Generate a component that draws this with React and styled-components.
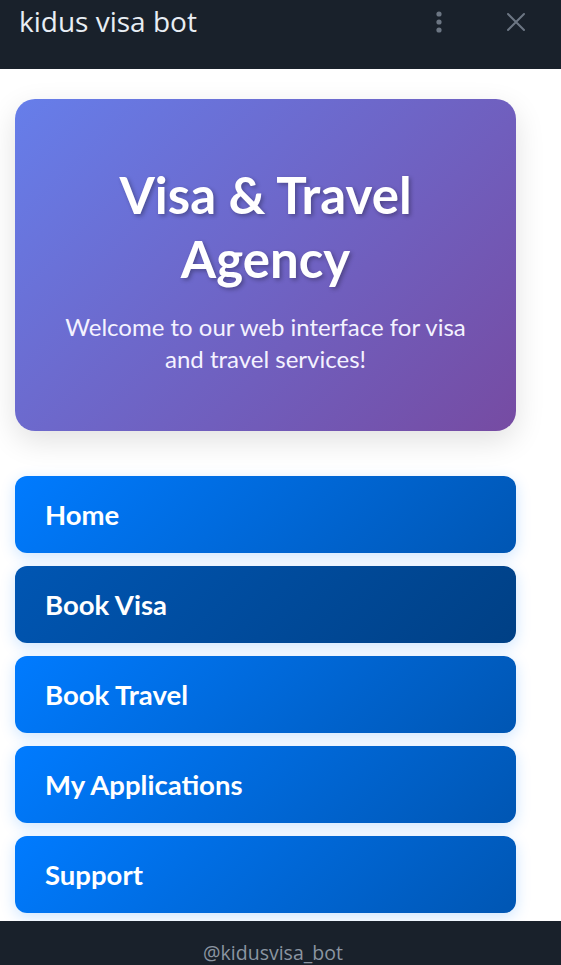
import React from "react";
import styled, { createGlobalStyle } from "styled-components";

const GlobalStyle = createGlobalStyle`
  html, body {
    margin: 0;
    padding: 0;
    background: #ffffff;
  }
  * {
    box-sizing: border-box;
  }
`;

const links = ["Home", "Book Visa", "Book Travel", "My Applications", "Support"];

const App = () => {
  return (
    <>
      <GlobalStyle />
      <Frame>
        <TopBar>
          <BotName>kidus visa bot</BotName>
          <BarActions>
            <IconButton aria-label="menu">
              <svg width="6" height="24" viewBox="0 0 6 24">
                <circle cx="3" cy="4" r="2.6" fill="currentColor" />
                <circle cx="3" cy="12" r="2.6" fill="currentColor" />
                <circle cx="3" cy="20" r="2.6" fill="currentColor" />
              </svg>
            </IconButton>
            <IconButton aria-label="close">
              <svg width="20" height="20" viewBox="0 0 20 20">
                <path
                  d="M2 2 L18 18 M18 2 L2 18"
                  stroke="currentColor"
                  strokeWidth="2"
                  strokeLinecap="round"
                />
              </svg>
            </IconButton>
          </BarActions>
        </TopBar>
        <Main>
          <Content>
            <Hero>
              <HeroTitle>Visa &amp; Travel Agency</HeroTitle>
              <HeroText>
                Welcome to our web interface for visa and travel services!
              </HeroText>
            </Hero>
            <NavList>
              {links.map((label) => (
                <NavButton key={label} $active={label === "Book Visa"}>
                  {label}
                </NavButton>
              ))}
            </NavList>
          </Content>
        </Main>
        <BottomBar>@kidusvisa_bot</BottomBar>
      </Frame>
    </>
  );
};

const Frame = styled.div`
  height: 965px;
  display: flex;
  flex-direction: column;
  overflow: hidden;
`;

const TopBar = styled.header`
  height: 69px;
  flex-shrink: 0;
  background: #19212b;
  display: flex;
  align-items: flex-start;
  justify-content: space-between;
  padding: 0 0 0 19px;
`;

const BotName = styled.div`
  font-family: "Open Sans", "Noto Sans", sans-serif;
  font-size: 28px;
  line-height: 42px;
  color: #e8eef4;
`;

const BarActions = styled.div`
  display: flex;
  align-items: center;
  height: 44px;
  gap: 64px;
  padding-right: 35px;
`;

const IconButton = styled.div`
  color: #6c7683;
  display: flex;
  align-items: center;
  justify-content: center;
  height: 44px;
`;

const Main = styled.main`
  flex: 1;
  width: 546px;
  overflow: hidden;
  background: #ffffff;
`;

const Content = styled.div`
  padding: 30px 30px 0 15px;
  font-family: "Lato", "Open Sans", sans-serif;
`;

const Hero = styled.section`
  height: 332px;
  border-radius: 20px;
  background: linear-gradient(135deg, #667eea 0%, #764ba2 100%);
  box-shadow: 0 10px 30px rgba(0, 0, 0, 0.12);
  color: #ffffff;
  text-align: center;
  padding: 64px 40px 0;
  margin-bottom: 45px;
`;

const HeroTitle = styled.h1`
  margin: 0 0 20px;
  font-size: 51px;
  line-height: 64px;
  font-weight: 700;
  text-shadow: 2px 2px 4px rgba(0, 0, 0, 0.3);
`;

const HeroText = styled.p`
  margin: 0;
  font-size: 24px;
  line-height: 32px;
  font-weight: 400;
  color: #f4f2ff;
`;

const NavList = styled.nav`
  display: flex;
  flex-direction: column;
  gap: 13px;
`;

const NavButton = styled.div`
  height: 77px;
  border-radius: 12px;
  display: flex;
  align-items: center;
  padding-left: 30px;
  color: #ffffff;
  font-size: 27.5px;
  font-weight: 700;
  background: ${({ $active }) =>
    $active
      ? "linear-gradient(135deg, #0056b3 0%, #004085 100%)"
      : "linear-gradient(135deg, #007bff 0%, #0056b3 100%)"};
  box-shadow: 0 4px 15px rgba(0, 123, 255, 0.2);
`;

const BottomBar = styled.footer`
  height: 44px;
  flex-shrink: 0;
  background: #19212b;
  color: #8b95a1;
  font-family: "Open Sans", "Noto Sans", sans-serif;
  font-size: 19.5px;
  line-height: 24px;
  text-align: center;
  padding: 20px 15px 0 0;
`;

export default App;
